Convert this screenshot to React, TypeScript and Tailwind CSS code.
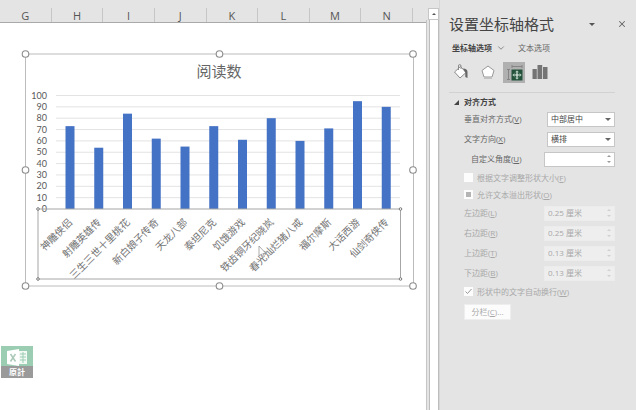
import React from 'react';
import { ChevronDown, X } from 'lucide-react';

const columns = ['G', 'H', 'I', 'J', 'K', 'L', 'M', 'N'];

const books = [
  { name: '神雕侠侣', value: 73 },
  { name: '射雕英雄传', value: 54 },
  { name: '三生三世十里桃花', value: 84 },
  { name: '新白娘子传奇', value: 62 },
  { name: '天龙八部', value: 55 },
  { name: '泰坦尼克', value: 73 },
  { name: '饥饿游戏', value: 61 },
  { name: '铁齿铜牙纪晓岚', value: 80 },
  { name: '春光灿烂猪八戒', value: 60 },
  { name: '福尔摩斯', value: 71 },
  { name: '大话西游', value: 95 },
  { name: '仙剑奇侠传', value: 90 },
];

const ticks = [0, 10, 20, 30, 40, 50, 60, 70, 80, 90, 100];

const axisY = 209;
const barX = (i: number) => 70 + i * 28.75;
const valueY = (v: number) => axisY - v * 1.135;

const Chart: React.FC = () => (
  <svg viewBox="21 50 396 240" className="block w-full" role="img" aria-label="阅读数">
    <rect x="25.5" y="54" width="388" height="232" fill="#fff" stroke="#bcbcbc" />
    <text x="219" y="77" textAnchor="middle" fontSize="15" fill="#666">
      阅读数
    </text>
    {ticks.map((t) => (
      <g key={t}>
        {t > 0 && <path d={`M56 ${valueY(t)}H400`} stroke="#e3e3e3" />}
        <text
          x="47"
          y={valueY(t) + 3}
          textAnchor="end"
          fontSize="9"
          fill="#595959"
          className="font-['Lato',sans-serif]"
        >
          {t}
        </text>
      </g>
    ))}
    {books.map((b, i) => (
      <g key={b.name}>
        <rect x={barX(i) - 4.5} y={valueY(b.value)} width="9" height={b.value * 1.135} fill="#4472c4" />
        <text
          transform={`translate(${barX(i) + 3} 223) rotate(-45)`}
          textAnchor="end"
          fontSize="10"
          fill="#737373"
        >
          {b.name}
        </text>
      </g>
    ))}
    <rect x="38" y={axisY} width="362.5" height="70" fill="none" stroke="#a6a6a6" />
    {[38, 400.5].map((x) =>
      [axisY, 279].map((y) => (
        <circle key={`${x}-${y}`} cx={x} cy={y} r="1.3" fill="#fff" stroke="#777" />
      )),
    )}
    {[25.5, 219.5, 413].map((x) =>
      [54, 170, 286]
        .filter((y) => !(x === 219.5 && y === 170))
        .map((y) => (
          <circle key={`${x}-${y}`} cx={x} cy={y} r="3.3" fill="#fff" stroke="#8c8c8c" strokeWidth="1.1" />
        )),
    )}
    <path d="M259 246v10l2.500-2 1.500 3.200 1.400-.7-1.500-3h3z" fill="#fff" stroke="#888" strokeWidth=".7" />
  </svg>
);

const ExcelBadge: React.FC = () => (
  <div className="flex h-8 w-8 flex-col bg-[#9bcdb2]">
    <svg viewBox="0 0 32 20" className="h-5 w-8">
      <path d="M17 5h9v13h-9z" fill="#f3faf6" />
      <path d="M19 8h6M19 11h6M19 14h6M22 6v11" stroke="#9bcdb2" />
      <path d="M6 5l12-2v17L6 18z" fill="#fff" />
      <path d="M9.500 8l5 7.500M14.500 8l-5 7.500" stroke="#a9c9b8" strokeWidth="1.500" />
    </svg>
    <span className="flex h-3 items-center justify-center bg-[#9a9a9a] text-[8px] leading-none font-bold text-white">
      原計
    </span>
  </div>
);

const SelectRow = ({ id, label, hotkey, value }: { id: string; label: string; hotkey: string; value: string }) => (
  <div className="flex h-5 items-center justify-between">
    <label htmlFor={id}>
      {label}(<u>{hotkey}</u>)
    </label>
    <div className="relative">
      <select
        id={id}
        defaultValue={value}
        className="block h-[15px] w-[68px] appearance-none border border-[#c6c6c6] bg-white pl-[3px] text-[#444]"
      >
        <option>{value}</option>
      </select>
      <svg viewBox="0 0 6 3" className="pointer-events-none absolute top-[6px] right-1 h-[3px] w-[6px]">
        <path d="M0 0h6L3 3z" fill="#666" />
      </svg>
    </div>
  </div>
);

interface ISpinRowProps {
  id: string;
  label: string;
  hotkey: string;
  value: string;
  indent?: boolean;
  disabled?: boolean;
}

const SpinRow = ({ id, label, hotkey, value, indent, disabled }: ISpinRowProps) => (
  <div className={`flex h-5 items-center justify-between ${disabled ? 'text-[#a8a8a8]' : ''}`}>
    <label htmlFor={id} className={indent ? 'pl-[7px]' : ''}>
      {label}(<u>{hotkey}</u>)
    </label>
    <div
      className={`flex h-[15px] w-[71px] border ${disabled ? 'border-[#ececec] bg-[#eeeeee]' : 'border-[#c6c6c6] bg-white'}`}
    >
      <input id={id} defaultValue={value} disabled={disabled} className="w-0 flex-1 pl-[3px]" />
      <div className="flex w-[11px] flex-col">
        <button aria-label="增加" disabled={disabled} className="flex flex-1 items-center justify-center">
          <svg viewBox="0 0 4 2" className="h-[2px] w-1">
            <path d="M0 2h4L2 0z" fill={disabled ? '#d0d0d0' : '#999'} />
          </svg>
        </button>
        <button aria-label="减少" disabled={disabled} className="flex flex-1 items-center justify-center">
          <svg viewBox="0 0 4 2" className="h-[2px] w-1">
            <path d="M0 0h4L2 2z" fill={disabled ? '#d0d0d0' : '#999'} />
          </svg>
        </button>
      </div>
    </div>
  </div>
);

const CheckRow = ({ label, hotkey, mark }: { label: string; hotkey: string; mark?: 'square' | 'tick' }) => (
  <label className="flex h-[17px] items-center gap-1 text-[#a8a8a8]">
    <span className="relative">
      <input
        type="checkbox"
        disabled
        defaultChecked={!!mark}
        className="block h-[9px] w-[9px] appearance-none bg-[#fcfcfc]"
      />
      {mark && (
        <svg viewBox="0 0 9 9" className="pointer-events-none absolute inset-0 h-[9px] w-[9px]">
          {mark === 'square' ? (
            <path d="M2 2h5v5H2z" fill="#b4b4b4" />
          ) : (
            <path d="M1.500 4.500l2 2 4-4.500" fill="none" stroke="#999" />
          )}
        </svg>
      )}
    </span>
    <span>
      {label}(<u>{hotkey}</u>)
    </span>
  </label>
);

const FormatPanel: React.FC = () => (
  <aside className="w-[197px] shrink-0 border-l border-[#d6d6d6] bg-[#e4e4e4] pt-[14px] pr-[21px] pl-[9px] font-['Open_Sans','Noto_Sans_CJK_SC',sans-serif] text-[8px] leading-3 text-[#666]">
    <div className="-mr-3 flex h-5 items-center">
      <h2 className="flex-1 text-[15px] leading-5 text-[#444]">设置坐标轴格式</h2>
      <button aria-label="窗格选项" className="mr-[22px]">
        <svg viewBox="0 0 6 3" className="h-[3px] w-[6px]">
          <path d="M0 0h6L3 3z" fill="#555" />
        </svg>
      </button>
      <button aria-label="关闭">
        <X className="h-[10px] w-[10px] text-[#666]" strokeWidth={2.5} />
      </button>
    </div>
    <div className="mt-[6px] flex h-4 items-center pl-[3px]">
      <button className="flex items-center gap-1 font-bold text-[#444]">
        坐标轴选项
        <ChevronDown className="h-[10px] w-[10px] text-[#777]" />
      </button>
      <button className="ml-3">文本选项</button>
    </div>
    <div className="mt-[6px] flex h-5 items-center gap-[3px]">
      <button aria-label="填充与线条" className="flex h-5 w-6 items-center justify-center">
        <svg viewBox="0 0 18 18" className="h-[18px] w-[18px]">
          <path d="M2.500 9L8.500 3.500l5.500 6-6 5.500z" fill="#fff" stroke="#8a8a8a" />
          <path d="M6.500 7V3q0-1.500 1.200-1.500T9 3v3" fill="none" stroke="#8a8a8a" />
          <path d="M11 5.500q4.500 0 4.500 3.500v6l-2.200-1V9.500z" fill="#666" />
        </svg>
      </button>
      <button aria-label="效果" className="flex h-5 w-6 items-center justify-center">
        <svg viewBox="0 0 16 16" className="h-4 w-4">
          <path d="M8 2l6 4.500-2 6.500H4L2 6.500z" fill="#fff" stroke="#979797" />
          <path d="M4 14.500h8" stroke="#c2c2c2" />
        </svg>
      </button>
      <button aria-label="大小与属性" className="flex h-[21px] w-[22px] items-center justify-center bg-[#b0b0b0]">
        <svg viewBox="0 0 19 19" className="h-[19px] w-[19px]">
          <path d="M7 3.500h10M7 2v3M17 2v3M3.500 6.500v10M2 6.500h3M2 16.500h3" stroke="#858585" />
          <path d="M6.500 6.500h11v11h-11z" fill="#24523a" />
          <path d="M12 8v8M8 12h8" stroke="#e8f2ec" strokeWidth="1.200" />
          <path
            d="M10.500 9.300L12 7.800l1.500 1.500M10.500 14.700l1.500 1.500 1.500-1.500M9.300 10.500L7.800 12l1.500 1.500M14.700 10.500l1.500 1.500-1.500 1.500"
            fill="none"
            stroke="#b9d2c4"
            strokeWidth=".8"
          />
        </svg>
      </button>
      <button aria-label="坐标轴选项" className="flex h-5 w-6 items-center justify-center">
        <svg viewBox="0 0 16 16" className="h-4 w-4">
          <path d="M.5 5h4.300v10H.5zM5.500 1h4.700v14H5.500zM11 3h4.500v12H11z" fill="#747474" />
        </svg>
      </button>
    </div>
    <hr className="mt-[10px] border-[#d2d2d2]" />
    <section className="pt-[3px] pl-[15px]">
      <h3 className="-ml-[10px] flex h-3 items-center gap-[5px] font-bold text-[#444]">
        <svg viewBox="0 0 5 5" className="h-[5px] w-[5px]">
          <path d="M5 0v5H0z" fill="#444" />
        </svg>
        对齐方式
      </h3>
      <div className="pt-[1px]">
        <SelectRow id="valign" label="垂直对齐方式" hotkey="V" value="中部居中" />
        <SelectRow id="direction" label="文字方向" hotkey="X" value="横排" />
        <SpinRow id="angle" label="自定义角度" hotkey="U" value="" indent />
        <CheckRow label="根据文字调整形状大小" hotkey="F" />
        <CheckRow label="允许文本溢出形状" hotkey="O" mark="square" />
        <SpinRow id="left" label="左边距" hotkey="L" value="0.25 厘米" disabled />
        <SpinRow id="right" label="右边距" hotkey="R" value="0.25 厘米" disabled />
        <SpinRow id="top" label="上边距" hotkey="T" value="0.13 厘米" disabled />
        <SpinRow id="bottom" label="下边距" hotkey="B" value="0.13 厘米" disabled />
        <CheckRow label="形状中的文字自动换行" hotkey="W" mark="tick" />
      </div>
      <button disabled className="mt-1 h-4 w-[47px] border border-[#eeeeee] bg-[#fcfcfc] text-[#a8a8a8]">
        分栏(<u>C</u>)...
      </button>
    </section>
  </aside>
);

const App: React.FC = () => {
  return (
    <div className="flex min-h-screen bg-[#e4e4e4] font-['Noto_Sans_CJK_SC',sans-serif]">
      <main className="flex min-w-0 flex-1 flex-col">
        <div className="flex h-[23px] border-b border-[#a9a9a9] pt-2 pr-[13px]">
          {columns.map((c) => (
            <div
              key={c}
              className="flex flex-1 items-center justify-center border-r border-[#c6c6c6] font-['Open_Sans',sans-serif] text-[11px] leading-none text-[#555]"
            >
              {c}
            </div>
          ))}
        </div>
        <div className="flex-1 bg-white pt-[27px] pr-[9px] pl-[21px]">
          <Chart />
          <div className="mt-14 -ml-5">
            <ExcelBadge />
          </div>
        </div>
      </main>
      <div className="flex w-[13px] shrink-0 flex-col pt-2">
        <button
          aria-label="向上滚动"
          className="ml-[2px] flex h-3 items-center justify-center border border-[#c6c6c6] bg-white"
        >
          <svg viewBox="0 0 4 2" className="h-[2px] w-1">
            <path d="M0 2h4L2 0z" fill="#555" />
          </svg>
        </button>
        <div className="flex-1 border-l border-[#c6c6c6] pl-[2px]">
          <div className="h-full border-x border-[#bdbdbd] bg-white" />
        </div>
      </div>
      <FormatPanel />
    </div>
  );
};

export default App;
